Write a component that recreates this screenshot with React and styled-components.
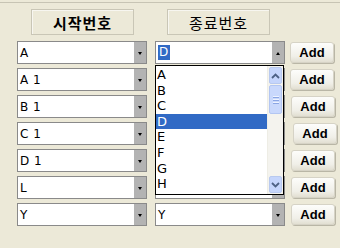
import React from 'react';
import styled, { createGlobalStyle } from 'styled-components';

const GlobalStyle = createGlobalStyle`
  html, body {
    margin: 0;
    padding: 0;
    background: #ece9d8;
    font-family: "DejaVu Sans", Tahoma, sans-serif;
  }
`;

const Frame = styled.div`
  width: 340px;
  height: 246px;
  margin-top: 2px;
  border-top: 1px solid #c7c4b4;
  box-sizing: border-box;
`;

const HeaderRow = styled.div`
  display: flex;
  gap: 33px;
  padding: 6px 0 0 31px;
`;

const HeaderBox = styled.div`
  width: 103px;
  height: 26px;
  box-sizing: border-box;
  border: 1px solid #c9c6b6;
  box-shadow: inset 1px 1px 0 #f7f6f0;
  display: flex;
  align-items: center;
  justify-content: center;
  font-family: "Noto Sans CJK KR", sans-serif;
  font-size: 15px;
  letter-spacing: 1px;
  font-weight: ${({ $bold }) => ($bold ? 700 : 400)};
  color: #000;
`;

const Rows = styled.div`
  position: relative;
  display: flex;
  flex-direction: column;
  gap: 4px;
  padding: 6px 0 0 17px;
`;

const Row = styled.div`
  display: flex;
  align-items: center;
  height: 23px;
`;

const Combo = styled.div`
  width: 130px;
  height: 23px;
  box-sizing: border-box;
  border: 1px solid #8a8a8a;
  background: #fff;
  display: flex;
  margin-right: ${({ $gap }) => $gap}px;
`;

const ComboText = styled.div`
  flex: 1;
  display: flex;
  align-items: center;
  padding-left: 2px;
  font-size: 12px;
  letter-spacing: 0.5px;
  color: #000;
  white-space: pre;
`;

const Selected = styled.span`
  background: #316ac5;
  color: #fff;
  padding: 0 1px;
  line-height: 15px;
`;

const ComboButton = styled.div`
  width: 12px;
  background: #b3b3b3;
  display: flex;
  align-items: center;
  justify-content: center;
`;

const Arrow = styled.div`
  width: 0;
  height: 0;
  border-left: 2.5px solid transparent;
  border-right: 2.5px solid transparent;
  ${({ $up }) =>
    $up ? 'border-bottom: 3px solid #000;' : 'border-top: 3px solid #000;'}
  margin-top: ${({ $up }) => ($up ? 1 : 2)}px;
`;

const AddButton = styled.button`
  width: 44px;
  height: 21px;
  margin-left: ${({ $shift }) => 5 + ($shift || 0)}px;
  padding: 0;
  border: 1px solid #d6d3c6;
  border-radius: 3px;
  background: linear-gradient(#fdfdfb, #f0efe8 70%, #e2dfd2);
  box-shadow: 1px 1px 0 #b9b6a6;
  font-family: "Liberation Sans", Arial, sans-serif;
  font-weight: 700;
  font-size: 13px;
  color: #000;
`;

const DropList = styled.div`
  position: absolute;
  top: 30px;
  left: 155px;
  width: 129px;
  height: 130px;
  box-sizing: border-box;
  border: 1px solid #000;
  background: #fff;
  display: flex;
`;

const Items = styled.div`
  flex: 1;
  padding-top: 1px;
`;

const Item = styled.div`
  height: 15.6px;
  line-height: 15.6px;
  padding-left: 1px;
  font-size: 13px;
  background: ${({ $active }) => ($active ? '#316ac5' : 'transparent')};
  color: ${({ $active }) => ($active ? '#fff' : '#000')};
`;

const ScrollBar = styled.div`
  width: 16px;
  background: #f4f3ee;
  display: flex;
  flex-direction: column;
  padding: 1px 0;
  box-sizing: border-box;
  border-left: 1px solid #eeede5;
`;

const ScrollBtn = styled.div`
  height: 15px;
  margin: 0 1px;
  border: 1px solid #b8c9ef;
  border-radius: 2px;
  background: #c5d5fc;
  display: flex;
  align-items: center;
  justify-content: center;
  margin-top: ${({ $bottom }) => ($bottom ? 'auto' : '0')};
`;

const Thumb = styled.div`
  height: 27px;
  margin: 1px 1px 0;
  border: 1px solid #b3c6f2;
  border-radius: 2px;
  background: #c9d8fc;
  display: flex;
  flex-direction: column;
  align-items: center;
  justify-content: center;
  gap: 1px;
`;

const Grip = styled.div`
  width: 6px;
  height: 1px;
  background: #eef3ff;
  border-bottom: 1px solid #8ba6e4;
`;

const Chevron = ({ down }) => (
  <svg width="9" height="6" viewBox="0 0 9 6">
    <path
      d={down ? 'M1 1 L4.5 4.5 L8 1' : 'M1 5 L4.5 1.5 L8 5'}
      fill="none"
      stroke="#4d6185"
      strokeWidth="1.8"
    />
  </svg>
);

const rows = [
  { left: 'A', right: 'D', open: true },
  { left: 'A 1' },
  { left: 'B 1', shift: 1 },
  { left: 'C 1', shift: 3 },
  { left: 'D 1', shift: 1 },
  { left: 'L', shift: 1 },
  { left: 'Y', right: 'Y', shift: 1 },
];

const listItems = ['A', 'B', 'C', 'D', 'E', 'F', 'G', 'H'];

export default function App() {
  return (
    <>
      <GlobalStyle />
      <Frame>
        <HeaderRow>
          <HeaderBox $bold>시작번호</HeaderBox>
          <HeaderBox>종료번호</HeaderBox>
        </HeaderRow>
        <Rows>
          {rows.map((r, i) => (
            <Row key={i}>
              <Combo $gap={8}>
                <ComboText>{r.left}</ComboText>
                <ComboButton><Arrow /></ComboButton>
              </Combo>
              <Combo $gap={0}>
                <ComboText>
                  {r.open ? <Selected>{r.right}</Selected> : r.right || ''}
                </ComboText>
                <ComboButton><Arrow $up={r.open} /></ComboButton>
              </Combo>
              <AddButton $shift={r.shift}>Add</AddButton>
            </Row>
          ))}
          <DropList>
            <Items>
              {listItems.map((it) => (
                <Item key={it} $active={it === 'D'}>{it}</Item>
              ))}
            </Items>
            <ScrollBar>
              <ScrollBtn><Chevron /></ScrollBtn>
              <Thumb>
                <Grip />
                <Grip />
                <Grip />
              </Thumb>
              <ScrollBtn $bottom><Chevron down /></ScrollBtn>
            </ScrollBar>
          </DropList>
        </Rows>
      </Frame>
    </>
  );
}
